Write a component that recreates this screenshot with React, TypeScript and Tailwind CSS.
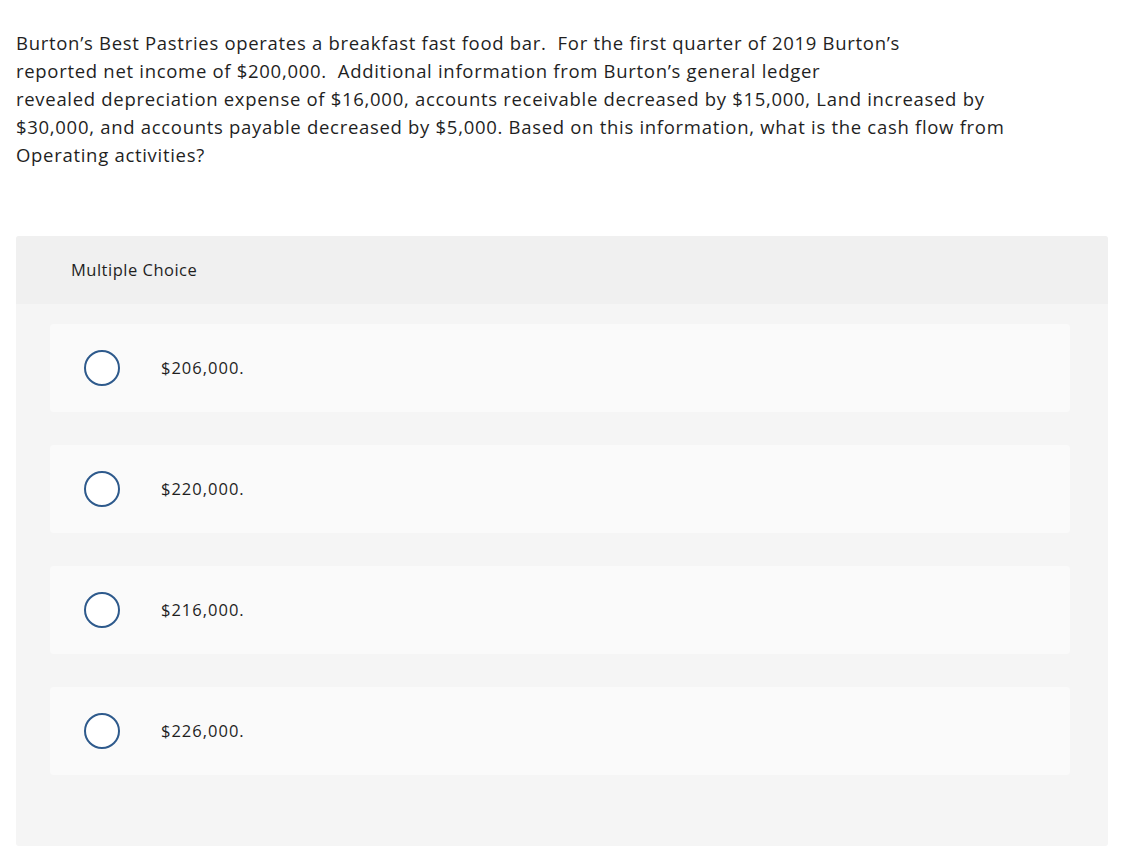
import React from "react";

const options = ["$206,000.", "$220,000.", "$216,000.", "$226,000."];

export default function App() {
  return (
    <div
      className="min-h-[868px] bg-white px-4 pt-[29px] text-[#1f1f1f]"
      style={{ fontFamily: "'Open Sans', Lato, sans-serif" }}
    >
      <p className="text-[18.5px] leading-[28px] tracking-[0.7px]">
        Burton’s Best Pastries operates a breakfast fast food bar.&nbsp; For the first quarter of 2019 Burton’s
        <br />
        reported net income of $200,000.&nbsp; Additional information from Burton’s general ledger
        <br />
        revealed depreciation expense of $16,000, accounts receivable decreased by $15,000, Land increased by
        <br />
        $30,000, and accounts payable decreased by $5,000. Based on this information, what is the cash flow from
        <br />
        Operating activities?
      </p>

      <div className="mt-[67px] w-[1092px] overflow-hidden rounded-[3px] bg-[#f5f5f5]">
        <div className="flex h-[68px] items-center bg-[#f0f0f0] pl-[55px] text-[16.5px] tracking-[0.5px]">
          Multiple Choice
        </div>
        <div className="flex flex-col gap-[33px] pb-[71px] pl-[34px] pr-[38px] pt-[20px]">
          {options.map((o) => (
            <div
              key={o}
              className="flex h-[88px] items-center rounded-[4px] bg-[#fafafa] pl-[34px]"
            >
              <span className="h-[36px] w-[36px] shrink-0 rounded-full border-2 border-[#2e5a8c] bg-white" />
              <span className="ml-[41px] text-[16.5px] tracking-[1px]">{o}</span>
            </div>
          ))}
        </div>
      </div>
    </div>
  );
}
